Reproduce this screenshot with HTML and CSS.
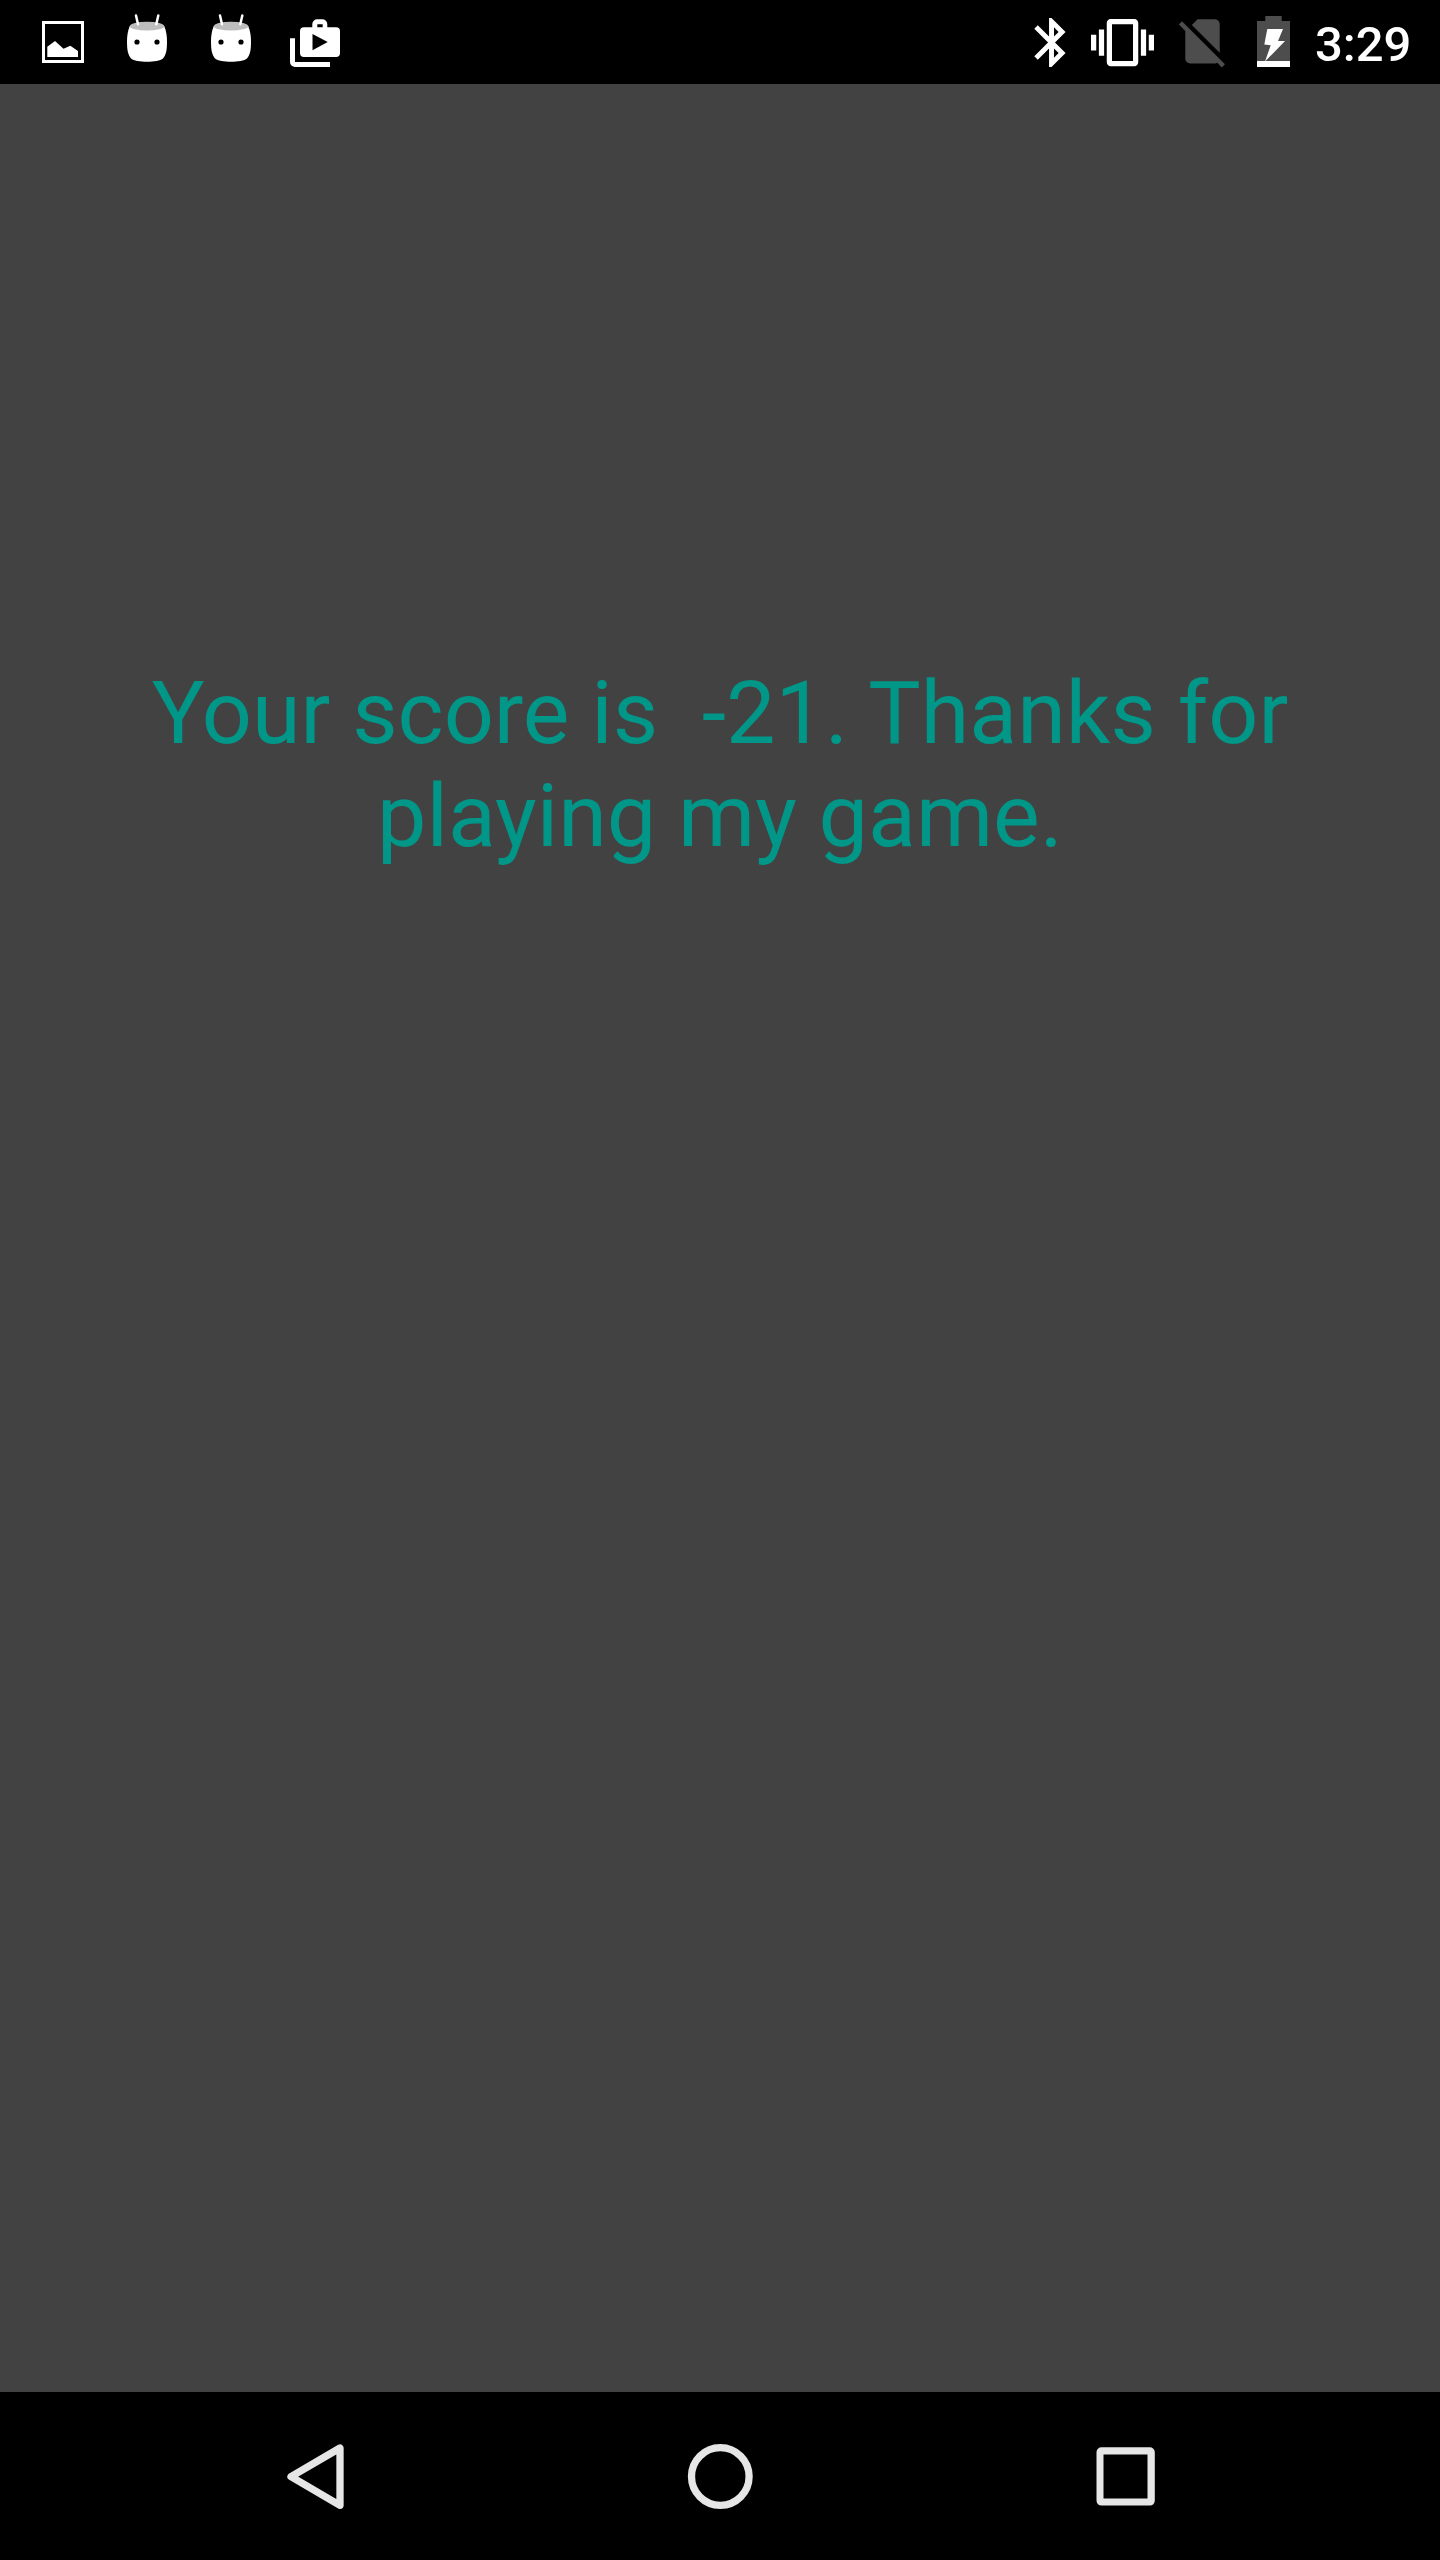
FILE: index.html
```html
<!DOCTYPE html>
<html lang="en">
<head>
<meta charset="utf-8">
<title>Score</title>
<link rel="stylesheet" href="styles.css">
</head>
<body>
<div class="screen">
  <header class="status">
    <div class="notifications">
      <svg class="note" viewBox="0 0 84 84"><rect x="23.5" y="22.5" width="39" height="39" fill="none" stroke="#fff" stroke-width="3"/><path d="M27.3 57V46.7L35 41l8.5 7.7 6.8-3L58 51v6z"/></svg>
      <svg class="note" viewBox="0 0 84 84"><path d="M25.8 26C23.5 31 23 37 23 42c0 8 1 13 4 16.5C32 62.8 54 62.8 59 58.500 62 55 63 50 63 42c0-5-.5-11-2.800-16z"/><ellipse cx="43" cy="26.200" rx="17.200" ry="4.400" fill="#bdbdbd"/><path d="M32 15.500l2 8.700M54.300 15.500l-2 8.700" stroke="#fff" stroke-width="2.500" stroke-linecap="round"/><circle cx="33" cy="42" r="2.600" fill="#000"/><circle cx="53" cy="42" r="2.600" fill="#000"/></svg>
      <svg class="note" viewBox="0 0 84 84"><path d="M25.8 26C23.5 31 23 37 23 42c0 8 1 13 4 16.5C32 62.8 54 62.8 59 58.500 62 55 63 50 63 42c0-5-.5-11-2.800-16z"/><ellipse cx="43" cy="26.200" rx="17.200" ry="4.400" fill="#bdbdbd"/><path d="M32 15.500l2 8.700M54.300 15.500l-2 8.700" stroke="#fff" stroke-width="2.500" stroke-linecap="round"/><circle cx="33" cy="42" r="2.600" fill="#000"/><circle cx="53" cy="42" r="2.600" fill="#000"/></svg>
      <svg class="note" viewBox="0 0 84 84"><path fill-rule="evenodd" d="M32 27.300h8.300V24.300a5 5 0 0 1 5-5h5a5 5 0 0 1 5 5v3H64a4 4 0 0 1 4 4V53a4 4 0 0 1-4 4H32a4 4 0 0 1-4-4V31.300a4 4 0 0 1 4-4zM45.300 24.300v3h5.400v-3zM40.500 34v16.200l15.200-8.200z"/><path d="M18 38.300h5V62h35v5H23a5 5 0 0 1-5-5z"/></svg>
    </div>
    <div class="system">
      <svg class="bluetooth" viewBox="0 0 60 84"><path transform="translate(0 13) scale(2.460)" d="M17.710 7.710L12 2h-1v7.590L6.410 5 5 6.410 10.590 12 5 17.590 6.410 19 11 14.410V22h1l5.710-5.710-4.300-4.290 4.300-4.290zM13 5.830l1.880 1.880L13 9.590V5.830zm1.880 10.460L13 18.170v-3.760l1.880 1.880z"/></svg>
      <svg class="vibrate" viewBox="0 0 63 84"><path transform="translate(0 11.100) scale(2.625)" d="M0 15h2V9H0v6zm3 2h2V7H3v10zm19-8v6h2V9h-2zm-3 8h2V7h-2v10zM16.500 3h-9C6.670 3 6 3.670 6 4.500v15c0 .83.67 1.500 1.500 1.500h9c.83 0 1.500-.67 1.500-1.500v-15c0-.83-.67-1.500-1.500-1.500zM16 19H8V5h8v14z"/></svg>
      <svg class="sim" viewBox="0 0 60 84"><path transform="translate(0 11.800) scale(2.460)" d="M18.990 5c0-1.100-.89-2-1.990-2h-7L7.660 5.340 19 16.680 18.990 5zM3.650 3.880L2.380 5.150 5 7.770V19c0 1.100.9 2 2 2h10.010c.35 0 .67-.1.960-.26l1.880 1.880 1.270-1.270L3.650 3.880z"/></svg>
      <svg class="battery" viewBox="0 0 33 84"><path fill="#4d4d4d" d="M8.300 16h16.400v5H33v46H0V21h8.300z"/><path d="M0 61h33v6H0zM10.300 29H26l-5 12h7L8 61.500l5.700-16.200-6.400-.7z"/></svg>
      <span class="clock">3:29</span>
    </div>
  </header>
  <main class="content">
    <p class="message">Your score is&nbsp; -21. Thanks for<br>playing my game.</p>
  </main>
  <nav class="navbar">
    <svg class="key" viewBox="0 0 84 84"><path d="M18 42.600L67 14v57.300z" stroke-linejoin="round"/></svg>
    <svg class="key" viewBox="0 0 84 84"><circle cx="42.300" cy="42.500" r="28.800"/></svg>
    <svg class="key" viewBox="0 0 84 84"><path class="solid" fill-rule="evenodd" d="M18.500 13.300h48.300a5 5 0 0 1 5 5v48.300a5 5 0 0 1-5 5H18.500a5 5 0 0 1-5-5V18.300a5 5 0 0 1 5-5zM20.500 20.500v44h44v-44z"/></svg>
  </nav>
</div>
</body>
</html>
```
FILE: styles.css
```css
body {
  margin: 0;
  background: #424242;
  font-family: Roboto, sans-serif;
}

.screen {
  display: flex;
  flex-direction: column;
  width: 1440px;
  height: 2560px;
}

.status {
  display: flex;
  justify-content: space-between;
  height: 84px;
  background: #000;
}

.status svg {
  display: block;
  height: 84px;
  fill: #fff;
}

.notifications {
  display: flex;
  padding-left: 20px;
}

.note {
  width: 84px;
}

.system {
  display: flex;
  width: 418px;
}

.bluetooth {
  width: 60px;
  margin-right: 9px;
}

.vibrate {
  width: 63px;
  margin-right: 19px;
}

.status .sim {
  width: 60px;
  margin-right: 24px;
  fill: #4d4d4d;
}

.battery {
  width: 33px;
  margin-right: 25px;
}

.clock {
  color: #fff;
  font-size: 49px;
  font-weight: 500;
  line-height: 89px;
}

.content {
  flex: 1;
  padding-top: 577px;
}

.message {
  margin: 0;
  color: #009688;
  font-size: 88px;
  line-height: 103px;
  text-align: center;
}

.navbar {
  display: flex;
  justify-content: center;
  align-items: center;
  gap: 321px;
  height: 168px;
  background: #000;
}

.key {
  width: 84px;
  height: 84px;
  fill: none;
  stroke: #e6e6e6;
  stroke-width: 7.3px;
}

.solid {
  fill: #e6e6e6;
  stroke: none;
}
```
